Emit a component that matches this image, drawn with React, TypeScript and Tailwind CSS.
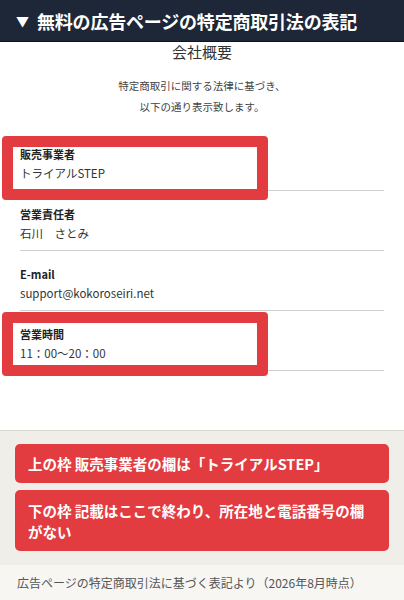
const ROWS = [
  { label: '販売事業者', value: 'トライアルSTEP', box: 'top-[5px]' },
  { label: '営業責任者', value: '石川　さとみ', box: null },
  { label: 'E-mail', value: 'support@kokoroseiri.net', box: null },
  { label: '営業時間', value: '11：00〜20：00', box: 'top-[1px]' },
];

export default function App() {
  return (
    <div
      className="w-[404px] h-[600px] overflow-hidden bg-white text-[#222]"
      style={{ fontFamily: '"Noto Sans CJK JP", "Noto Sans", sans-serif' }}
    >
      {/* Header */}
      <div className="h-[42px] bg-[#1d2737] border-b border-[#0e141d] flex items-center pl-[16px]">
        <span className="text-white text-[13px] mr-[8px]">▼</span>
        <h1 className="text-white text-[18px] font-bold leading-none tracking-[-0.2px]">
          無料の広告ページの特定商取引法の表記
        </h1>
      </div>

      {/* Company overview */}
      <div className="h-[388px] flex flex-col">
        <h2 className="text-center text-[15px] leading-[20px] mt-0 text-[#333]">会社概要</h2>
        <div className="mt-[13px] text-center text-[10.5px] leading-[21px] text-[#444]">
          <p>特定商取引に関する法律に基づき、</p>
          <p>以下の通り表示致します。</p>
        </div>

        <div className="mt-[14px] px-5">
          {ROWS.map((row) => (
            <div key={row.label} className="relative h-[60px] pt-[14px] border-b border-[#cfcfcf]">
              <p className="text-[11px] leading-[18px] font-bold">{row.label}</p>
              <p className="text-[11.5px] leading-[20px] text-[#333]">{row.value}</p>
              {row.box && (
                <div
                  className={`absolute ${row.box} -left-[18px] w-[266px] h-[64px] border-[11px] border-[#e23c40] rounded-[4px]`}
                />
              )}
            </div>
          ))}
        </div>
      </div>

      {/* Notes */}
      <div className="h-[135px] bg-[#efeee9] border-t border-[#d9d8d0] px-[15px] pt-[13px] flex flex-col gap-[7px]">
        <div className="h-[39px] bg-[#e23c40] rounded-[5px] px-[13px] flex items-center">
          <p className="text-white text-[14.5px] font-bold leading-[21px]">
            上の枠 販売事業者の欄は「トライアルSTEP」
          </p>
        </div>
        <div className="h-[61px] bg-[#e23c40] rounded-[5px] px-[13px] flex items-center">
          <p className="text-white text-[14.5px] font-bold leading-[21px]">
            下の枠 記載はここで終わり、所在地と電話番号の欄がない
          </p>
        </div>
      </div>

      {/* Footer */}
      <div className="h-[35px] bg-[#f7f6f3] px-[17px] flex items-center">
        <p className="text-[12px] text-[#555]">広告ページの特定商取引法に基づく表記より（2026年8月時点）</p>
      </div>
    </div>
  );
}
